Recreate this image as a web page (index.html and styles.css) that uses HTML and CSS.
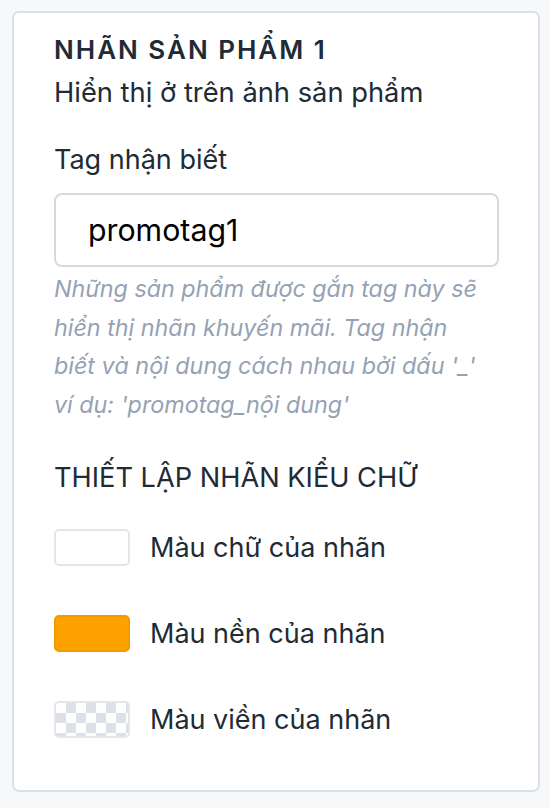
FILE: index.html
```html
<!DOCTYPE html>
<html lang="vi">
<head>
<meta charset="utf-8">
<link rel="stylesheet" href="styles.css">
</head>
<body>
<div class="card">
  <h2 class="title">NHÃN SẢN PHẨM 1</h2>
  <p class="subtitle">Hiển thị ở trên ảnh sản phẩm</p>
  <label class="label">Tag nhận biết</label>
  <div class="input">promotag1</div>
  <p class="help">Những sản phẩm được gắn tag này sẽ<br>hiển thị nhãn khuyến mãi. Tag nhận<br>biết và nội dung cách nhau bởi dấu '_'<br>ví dụ: 'promotag_nội dung'</p>
  <h3 class="section">THIẾT LẬP NHÃN KIỂU CHỮ</h3>
  <div class="rows">
    <div class="row"><span class="swatch white"></span><span class="rlabel">Màu chữ của nhãn</span></div>
    <div class="row"><span class="swatch orange"></span><span class="rlabel">Màu nền của nhãn</span></div>
    <div class="row"><span class="swatch checker"></span><span class="rlabel">Màu viền của nhãn</span></div>
  </div>
</div>
</body>
</html>
```
FILE: styles.css
```css
html, body { margin: 0; padding: 0; }
body {
  background: #f7f8fa;
  font-family: Inter, "Noto Sans", sans-serif;
  color: #212b36;
  padding: 11px 10px 0 12px;
  height: 808px;
  box-sizing: border-box;
}
.card {
  background: #fff;
  border: 2px solid #d9e0e7;
  border-radius: 7px;
  height: 781px;
  box-sizing: border-box;
  padding: 20px 40px 0 40px;
}
.title {
  margin: 0;
  font-size: 26px;
  font-weight: 600;
  letter-spacing: 2px;
  line-height: 34px;
}
.subtitle {
  margin: 8px 0 0;
  font-size: 27.3px;
  line-height: 36px;
}
.label {
  display: block;
  margin-top: 31px;
  font-size: 27px;
  line-height: 36px;
}
.input {
  margin-top: 15px;
  width: 445px;
  height: 74px;
  box-sizing: border-box;
  border: 2px solid #d3dbe2;
  border-radius: 8px;
  padding: 0 32px;
  display: flex;
  align-items: center;
  font-size: 30.3px;
  color: #000;
}
.help {
  margin: 3px 0 0;
  font-size: 23.3px;
  font-style: italic;
  color: #95a2b3;
  line-height: 38.5px;
  white-space: nowrap;
}
.section {
  margin: 36px 0 0;
  font-size: 27.2px;
  font-weight: 400;
  line-height: 36px;
}
.rows {
  margin-top: 33px;
  display: flex;
  flex-direction: column;
  gap: 49px;
}
.row {
  display: flex;
  align-items: center;
  gap: 20px;
  height: 37px;
}
.swatch {
  width: 76px;
  height: 37px;
  box-sizing: border-box;
  border-radius: 5px;
  border: 2px solid #e4e7ea;
  flex: none;
}
.white { background: #fff; }
.orange { background: #ffa100; border-color: #f09a00; }
.checker {
  background-color: #fff;
  background-image:
    linear-gradient(45deg, #dde1e7 25%, transparent 25%, transparent 75%, #dde1e7 75%),
    linear-gradient(45deg, #dde1e7 25%, transparent 25%, transparent 75%, #dde1e7 75%);
  background-size: 20px 20px;
  background-position: 0 0, 10px 10px;
}
.rlabel {
  font-size: 27px;
  line-height: 36px;
}
```
